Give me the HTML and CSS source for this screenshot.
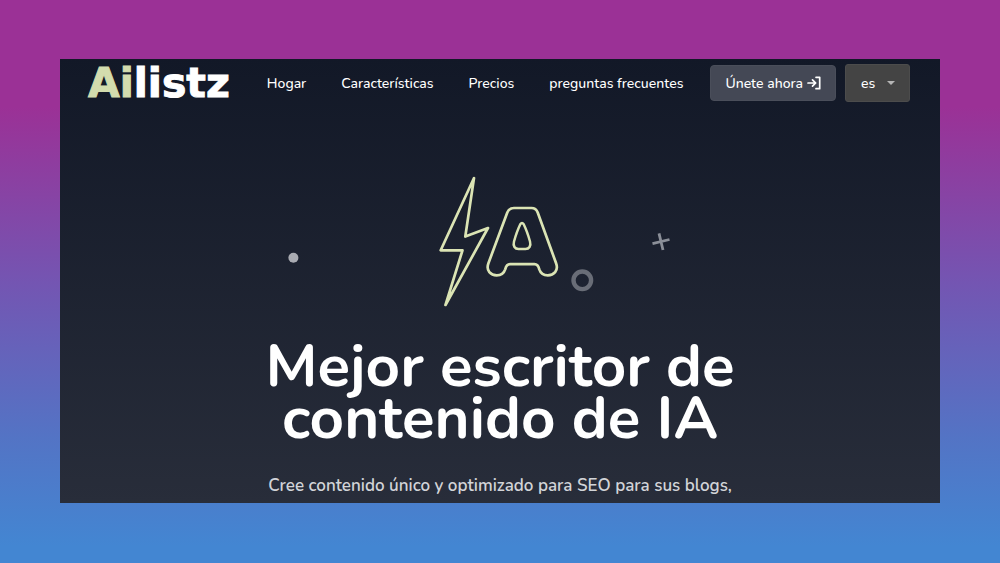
FILE: index.html
```html
<!DOCTYPE html>
<html lang="es">
<head>
  <meta charset="UTF-8" />
  <meta name="viewport" content="width=device-width, initial-scale=1.0" />
  <title>Ailistz</title>
  <link rel="stylesheet" href="styles.css">
</head>
<body>
  <div class="page">
    <header class="navbar">
      <a class="logo" href="#"><span>Ai</span>listz</a>
      <nav class="nav-links">
        <a href="#">Hogar</a>
        <a href="#">Características</a>
        <a href="#">Precios</a>
        <a href="#">preguntas frecuentes</a>
      </nav>
      <div class="nav-actions">
        <button class="join-button" type="button">
          Únete ahora
          <svg viewBox="0 0 14 14" width="14" height="14" fill="none" stroke="currentColor" stroke-width="1.7" stroke-linejoin="round" stroke-linecap="round">
            <path d="M1 7h7.5M5.5 3.8 8.7 7l-3.2 3.2M9 1.3h3.7v11.4H9" />
          </svg>
        </button>
        <div class="language">
          <select aria-label="Idioma">
            <option>es</option>
            <option>en</option>
          </select>
          <svg class="caret" viewBox="0 0 8 4" width="8" height="4"><path d="M0 0h8L4 4z" fill="currentColor" /></svg>
        </div>
      </div>
    </header>

    <main class="hero">
      <svg class="hero-art" viewBox="280 170 440 140" fill="none" aria-hidden="true">
        <circle cx="293.4" cy="257.7" r="5" fill="#a9abb2" />
        <g stroke="#dbe4b4" stroke-width="2.7">
          <path d="M474 178 440.7 250.3H462.5L445.5 305 488 228 465.3 236.5Z" stroke-linejoin="round" />
          <path d="M514 208H531.5Q536 208 537.7 212.5L556 263C559 271 553.5 275.3 547.8 275.3C543.5 275.3 540.5 273 539.3 269.3Q538 264.2 534.5 264.2H510Q506.5 264.2 505.2 269.3C504 273 501 275.3 496.7 275.3C491 275.3 485.5 271 488.5 263L507.3 212.5Q509.3 208 514 208Z" />
          <path d="M520.3 224.3Q522 221.8 523.7 224.3Q527 231 530 241.5C531.3 246.3 529 249 525.5 249H518.5C515 249 512.7 246.3 514 241.5Q517 231 520.3 224.3Z" stroke-width="2.5" />
        </g>
        <circle cx="582.3" cy="280.3" r="8.8" stroke="#696d77" stroke-width="4.4" />
        <path d="M652.5 243.7 669.5 239.5M659 233.3 663 250" stroke="#8b8f98" stroke-width="2.8" />
      </svg>
      <h1>Mejor escritor de<br>contenido de IA</h1>
      <p>Cree contenido único y optimizado para SEO para sus blogs,</p>
    </main>
  </div>
</body>
</html>
```

FILE: styles.css
```css
:root {
  --text-color: #ffffff;
  --muted-text: #d2d4d8;
  --accent-color: #d3dcae;
  --button-bg: #444855;
  --select-bg: #444444;
}

* {
  box-sizing: border-box;
}

body {
  margin: 0;
  padding: 59px 60px 60px;
  min-height: 100vh;
  font-family: Nunito, Lato, sans-serif;
  color: var(--text-color);
  background: linear-gradient(#9b3196 0%, #9b3196 19%, #7455b2 50%, #5374c5 78%, #4386d2 97%);
}

.page {
  overflow: hidden;
  background: linear-gradient(#121827, #282d3a);
}

.navbar {
  display: flex;
  align-items: center;
  justify-content: space-between;
  padding: 0 30px 0 28px;
  height: 48px;
}

.logo {
  font-family: "DejaVu Sans", sans-serif;
  font-size: 41px;
  font-weight: 700;
  line-height: 48px;
  color: var(--text-color);
  text-decoration: none;
  -webkit-text-stroke: 1px currentColor;
}

.logo span {
  color: var(--accent-color);
}

.nav-links {
  display: flex;
  gap: 35px;
  margin: 0 27px 0 auto;
}

.nav-links a {
  font-size: 14px;
  font-weight: 500;
  color: var(--text-color);
  text-decoration: none;
  white-space: nowrap;
}

.nav-actions {
  display: flex;
  align-items: center;
  gap: 9px;
}

.join-button {
  display: flex;
  align-items: center;
  gap: 4px;
  height: 36px;
  padding: 0 14px;
  border: 1px solid #4a4e5a;
  border-radius: 4px;
  background-color: var(--button-bg);
  color: var(--text-color);
  font-family: inherit;
  font-size: 14px;
  font-weight: 500;
  white-space: nowrap;
  cursor: pointer;
}

.language {
  position: relative;
}

.language select {
  appearance: none;
  width: 65px;
  height: 38px;
  padding: 0 15px;
  border: 1px solid #4c4c4c;
  border-radius: 3px;
  background-color: var(--select-bg);
  color: var(--text-color);
  font-family: inherit;
  font-size: 14px;
  font-weight: 500;
}

.caret {
  position: absolute;
  right: 15px;
  top: 17px;
  color: #b5b5b5;
  pointer-events: none;
}

.hero {
  padding: 63px 28px 5px;
  text-align: center;
}

.hero-art {
  display: block;
  width: 440px;
  max-width: 100%;
  margin: 0 auto 30px;
}

h1 {
  margin: 0 0 30px;
  font-size: 60px;
  font-weight: 700;
  line-height: 52px;
}

.hero p {
  margin: 0;
  font-size: 17px;
  font-weight: 600;
  line-height: 24px;
  color: var(--muted-text);
}
```
